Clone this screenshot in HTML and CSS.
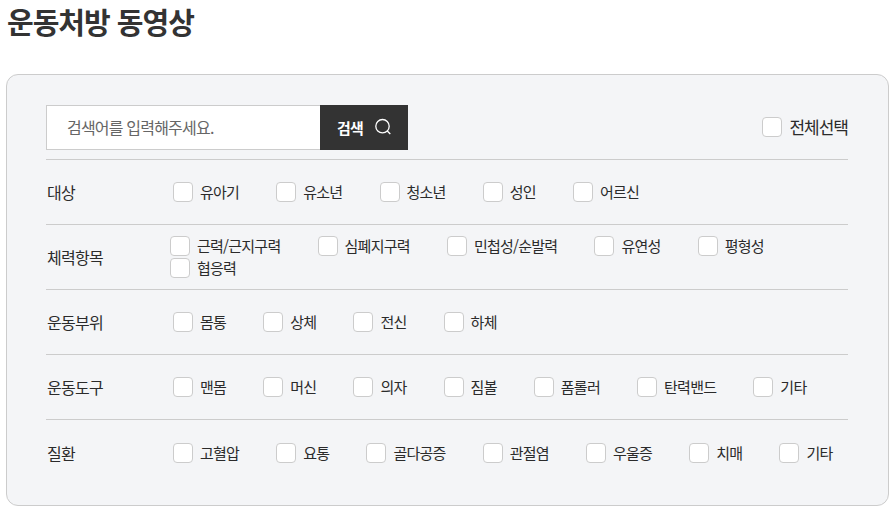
FILE: index.html
```html
<!DOCTYPE html>
<html lang="ko">
<head>
<meta charset="utf-8">
<title>운동처방 동영상</title>
<link rel="stylesheet" href="styles.css">
</head>
<body>
<h1 class="title">운동처방 동영상</h1>
<section class="panel">
  <div class="top">
    <form class="search">
      <input class="search-input" type="text" placeholder="검색어를 입력해주세요.">
      <button class="search-btn" type="button">검색
        <svg class="search-icon" width="18" height="18" viewBox="0 0 18 18" fill="none" stroke="#fff" stroke-width="1.3"><circle cx="8.5" cy="8.2" r="6.7"/><path d="M13.3 13l3 3"/></svg>
      </button>
    </form>
    <label class="opt all"><span class="box"></span>전체선택</label>
  </div>
  <div class="row">
    <div class="name">대상</div>
    <div class="opts">
      <label class="opt"><span class="box"></span>유아기</label>
      <label class="opt"><span class="box"></span>유소년</label>
      <label class="opt"><span class="box"></span>청소년</label>
      <label class="opt"><span class="box"></span>성인</label>
      <label class="opt"><span class="box"></span>어르신</label>
    </div>
  </div>
  <div class="row">
    <div class="name">체력항목</div>
    <div class="opts wrap">
      <label class="opt"><span class="box"></span>근력/근지구력</label>
      <label class="opt"><span class="box"></span>심폐지구력</label>
      <label class="opt"><span class="box"></span>민첩성/순발력</label>
      <label class="opt"><span class="box"></span>유연성</label>
      <label class="opt"><span class="box"></span>평형성</label>
      <label class="opt"><span class="box"></span>협응력</label>
    </div>
  </div>
  <div class="row">
    <div class="name">운동부위</div>
    <div class="opts">
      <label class="opt"><span class="box"></span>몸통</label>
      <label class="opt"><span class="box"></span>상체</label>
      <label class="opt"><span class="box"></span>전신</label>
      <label class="opt"><span class="box"></span>하체</label>
    </div>
  </div>
  <div class="row">
    <div class="name">운동도구</div>
    <div class="opts">
      <label class="opt"><span class="box"></span>맨몸</label>
      <label class="opt"><span class="box"></span>머신</label>
      <label class="opt"><span class="box"></span>의자</label>
      <label class="opt"><span class="box"></span>짐볼</label>
      <label class="opt"><span class="box"></span>폼롤러</label>
      <label class="opt"><span class="box"></span>탄력밴드</label>
      <label class="opt"><span class="box"></span>기타</label>
    </div>
  </div>
  <div class="row">
    <div class="name">질환</div>
    <div class="opts">
      <label class="opt"><span class="box"></span>고혈압</label>
      <label class="opt"><span class="box"></span>요통</label>
      <label class="opt"><span class="box"></span>골다공증</label>
      <label class="opt"><span class="box"></span>관절염</label>
      <label class="opt"><span class="box"></span>우울증</label>
      <label class="opt"><span class="box"></span>치매</label>
      <label class="opt"><span class="box"></span>기타</label>
    </div>
  </div>
</section>
</body>
</html>
```
FILE: styles.css
```css
* { box-sizing: border-box; }
html, body { margin: 0; padding: 0; }
body {
  background: #fff;
  color: #2b2b2b;
  font-family: "Noto Sans CJK KR", "Noto Sans", sans-serif;
  font-size: 15px;
  letter-spacing: -0.05em;
  padding: 0 3px 0 6px;
  overflow: hidden;
}
.title {
  margin: 0 0 29px;
  padding-left: 1px;
  height: 45px;
  font-size: 29px;
  letter-spacing: -1px;
  line-height: 43px;
  font-weight: 700;
  color: #333;
}
.panel {
  width: 883px;
  height: 432px;
  border: 1px solid #ccc;
  border-radius: 12px;
  background: #f4f5f7;
  padding: 30px 40px 0 39px;
}
.top {
  display: flex;
  justify-content: space-between;
  align-items: center;
  height: 55px;
  padding-bottom: 10px;
  border-bottom: 1px solid #ccc;
}
.search { display: flex; height: 45px; margin: 0; }
.search-input {
  width: 274px;
  height: 45px;
  border: 1px solid #ccc;
  border-right: 0;
  background: #fff;
  padding: 0 0 0 20px;
  font: inherit;
  font-size: 16px;
  letter-spacing: -0.05em;
  color: #333;
  outline: none;
  border-radius: 0;
}
.search-input::placeholder { color: #666; opacity: 1; }
.search-btn {
  display: flex;
  align-items: center;
  width: 88px;
  height: 45px;
  border: 0;
  border-radius: 0;
  background: #333;
  color: #fff;
  font: inherit;
  letter-spacing: inherit;
  font-weight: 700;
  padding: 0 0 0 17px;
  gap: 11px;
}
.search-icon { display: block; }
.row {
  display: flex;
  align-items: center;
  height: 65px;
  border-bottom: 1px solid #ccc;
  padding-left: 1px;
}
.row:last-child { border-bottom: 0; }
.name { width: 126px; flex: none; font-size: 16px; }
.opts { display: flex; flex-wrap: wrap; column-gap: 37.1px; flex: 1; }
.opts.wrap { margin-left: -3px; row-gap: 2px; }
.opt { display: flex; align-items: center; gap: 7px; height: 20px; line-height: 20px; white-space: nowrap; }
.all { font-size: 17px; letter-spacing: -1px; }
.box {
  flex: none;
  width: 20px;
  height: 20px;
  border: 1px solid #ccc;
  border-radius: 4px;
  background: #fff;
}
```
